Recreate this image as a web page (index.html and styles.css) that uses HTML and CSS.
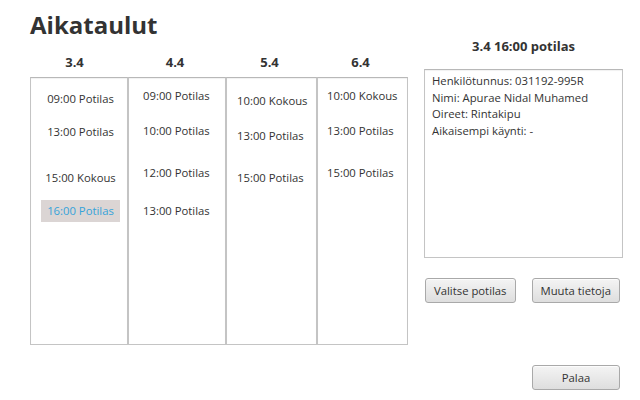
FILE: index.html
```html
<!DOCTYPE html>
<html lang="fi">
<head>
<meta charset="utf-8">
<title>Aikataulut</title>
<link rel="stylesheet" href="styles.css">
</head>
<body>
<div class="page">
  <section class="schedule">
    <h1 class="title">Aikataulut</h1>
    <div class="days">
      <div class="day-head">3.4</div>
      <div class="day-head">4.4</div>
      <div class="day-head">5.4</div>
      <div class="day-head">6.4</div>
      <ul class="list list-1">
        <li class="item">09:00 Potilas</li>
        <li class="item">13:00 Potilas</li>
        <li class="item">15:00 Kokous</li>
        <li class="item selected">16:00 Potilas</li>
      </ul>
      <ul class="list list-2">
        <li class="item">09:00 Potilas</li>
        <li class="item">10:00 Potilas</li>
        <li class="item">12:00 Potilas</li>
        <li class="item">13:00 Potilas</li>
      </ul>
      <ul class="list list-3">
        <li class="item">10:00 Kokous</li>
        <li class="item">13:00 Potilas</li>
        <li class="item">15:00 Potilas</li>
      </ul>
      <ul class="list list-4">
        <li class="item">10:00 Kokous</li>
        <li class="item">13:00 Potilas</li>
        <li class="item">15:00 Potilas</li>
      </ul>
    </div>
  </section>
  <aside class="details">
    <h2 class="details-title">3.4 16:00 potilas</h2>
    <div class="info-box">
      <div>Henkilötunnus: 031192-995R</div>
      <div>Nimi: Apurae Nidal Muhamed</div>
      <div>Oireet: Rintakipu</div>
      <div>Aikaisempi käynti: -</div>
    </div>
    <div class="actions">
      <button class="btn">Valitse potilas</button>
      <button class="btn">Muuta tietoja</button>
    </div>
    <button class="btn btn-back">Palaa</button>
  </aside>
</div>
</body>
</html>
```

FILE: styles.css
```css
* { box-sizing: border-box; }
html, body { margin: 0; padding: 0; background: #ffffff; }
body {
  width: 640px;
  height: 400px;
  overflow: hidden;
  font-family: "Open Sans", "Noto Sans", sans-serif;
  font-size: 11.3px;
  color: #333333;
}
.page {
  display: flex;
  padding-left: 30px;
}
.schedule { width: 378px; }
.title {
  margin: 10px 0 0 0;
  font-size: 24px;
  line-height: 30px;
  font-weight: 700;
  color: #333333;
}
.days {
  margin-top: 14px;
  display: grid;
  grid-template-columns: 98px 98px 91px 91px;
  grid-template-rows: 16px 268px;
  row-gap: 7px;
}
.day-head {
  font-weight: 700;
  font-size: 13px;
  line-height: 16px;
  text-align: center;
  padding-right: 4px;
}
.day-head:first-child { padding-right: 9px; }
.list {
  margin: 0;
  list-style: none;
  border: 1px solid #c4c4c4;
  border-top-color: #b8b8b8;
  box-shadow: inset 0 1px 1px rgba(0,0,0,0.06);
  display: flex;
  flex-direction: column;
  align-items: flex-start;
}
.item {
  height: 22px;
  line-height: 22px;
  white-space: nowrap;
}
.list-1 { padding: 10px 0 0 10px; }
.list-1 .item { width: 79px; text-align: center; }
.list-1 .item:nth-child(2) { margin-top: 11px; }
.list-1 .item:nth-child(3) { margin-top: 24px; }
.list-1 .item:nth-child(4) { margin-top: 11px; }
.list-2 { padding: 7px 0 0 14px; }
.list-2 .item:nth-child(2) { margin-top: 13px; }
.list-2 .item:nth-child(3) { margin-top: 20px; }
.list-2 .item:nth-child(4) { margin-top: 16px; }
.list-3 { padding: 12px 0 0 10px; }
.list-3 .item:nth-child(2) { margin-top: 13px; }
.list-3 .item:nth-child(3) { margin-top: 20px; }
.list-4 { padding: 7px 0 0 9px; }
.list-4 .item:nth-child(2) { margin-top: 13px; }
.list-4 .item:nth-child(3) { margin-top: 20px; }
.selected {
  background: #dbd5d4;
  color: #35a3da;
}
.details {
  margin-left: 16px;
  width: 199px;
  padding-top: 38px;
  display: flex;
  flex-direction: column;
}
.details-title {
  margin: 0;
  font-size: 13px;
  line-height: 16px;
  font-weight: 700;
  text-align: center;
}
.info-box {
  margin-top: 15px;
  height: 189px;
  border: 1px solid #c4c4c4;
  border-top-color: #b8b8b8;
  box-shadow: inset 0 1px 1px rgba(0,0,0,0.06);
  padding: 3px 7px;
  line-height: 16.6px;
}
.actions {
  margin-top: 20px;
  display: flex;
  gap: 16px;
  padding-left: 1px;
}
.btn {
  height: 25px;
  padding: 0 8px;
  font-family: "Open Sans", "Noto Sans", sans-serif;
  font-size: 11.3px;
  color: #333333;
  border: 1px solid #a9a9a9;
  border-radius: 3px;
  background: linear-gradient(#f4f4f4, #dedede);
  box-shadow: inset 0 1px 0 rgba(255,255,255,0.7);
}
.btn-back {
  align-self: flex-end;
  width: 88px;
  margin-top: 62px;
  margin-right: 3px;
}
```
